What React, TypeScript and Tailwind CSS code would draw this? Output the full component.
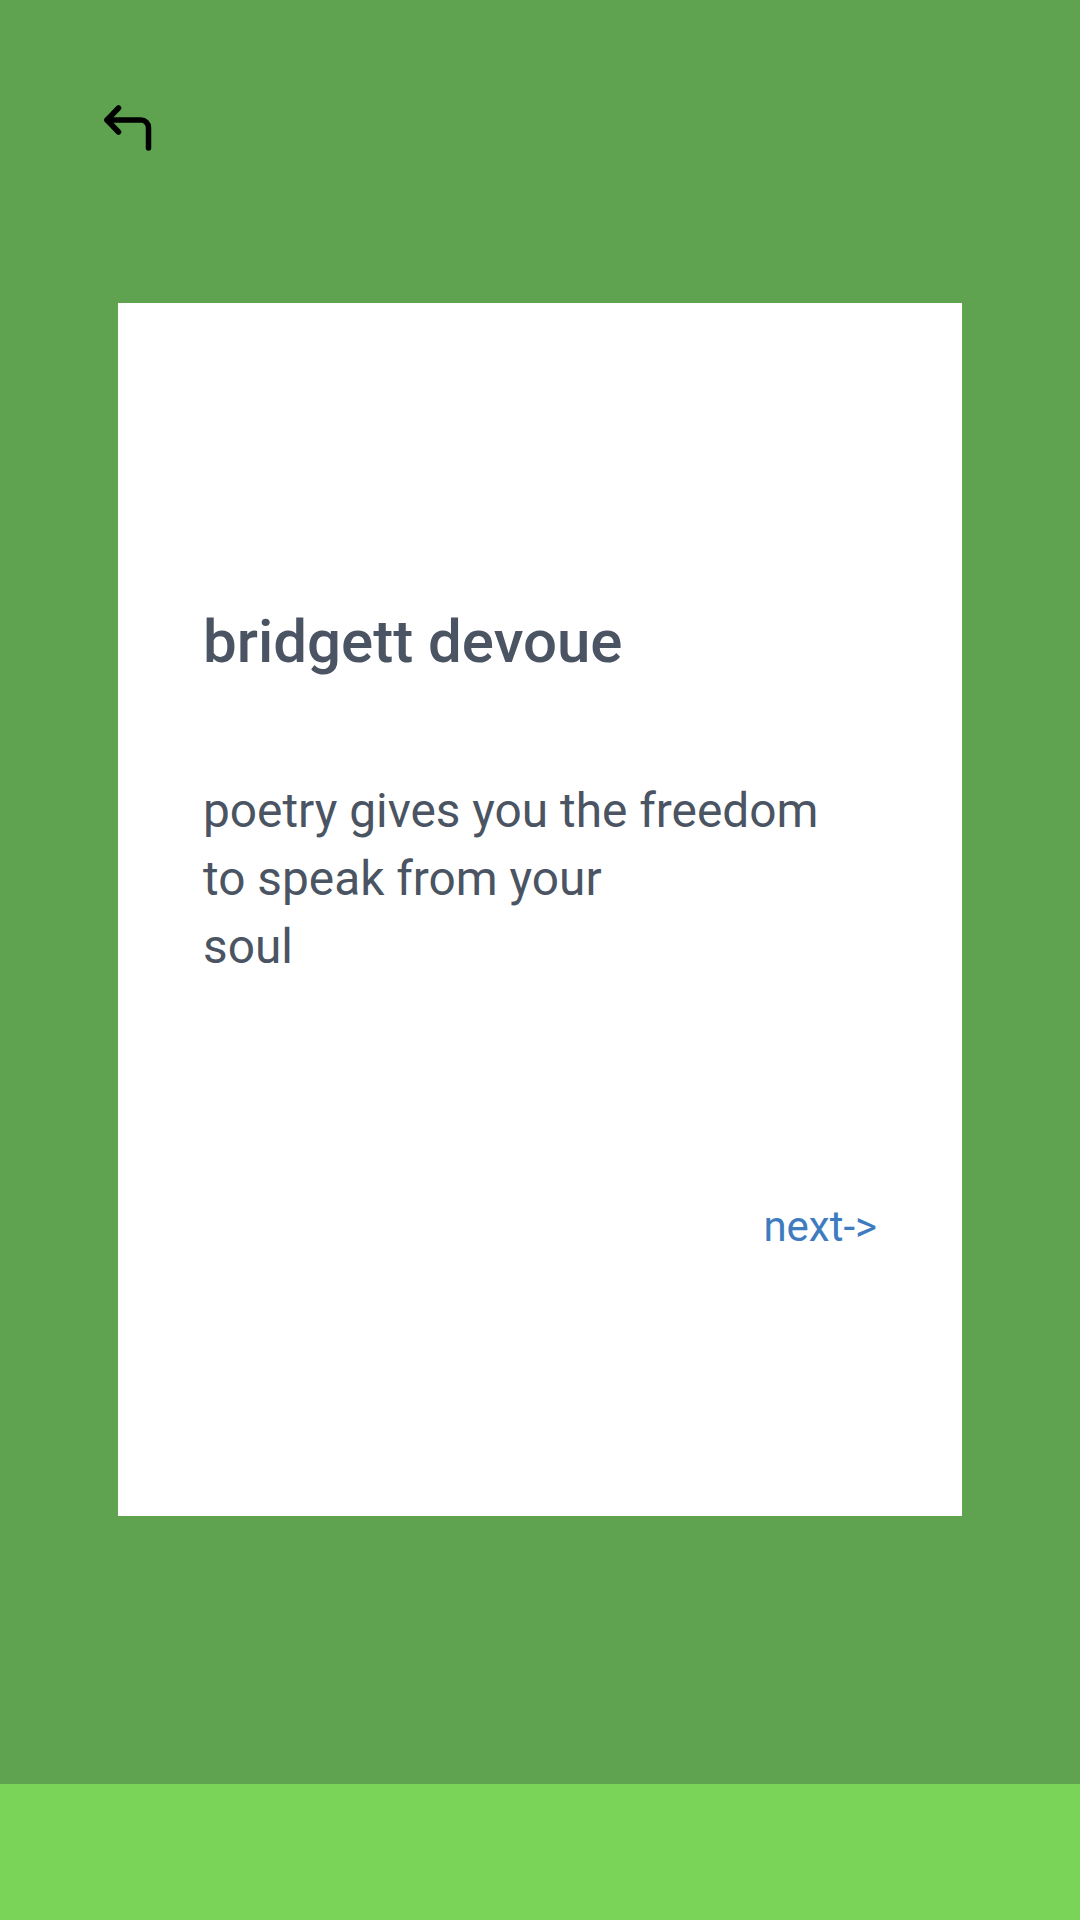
const BackIcon = () => (
    <svg width="56" height="56" viewBox="0 0 56 56" fill="none" stroke="#000000" strokeWidth="5.5" strokeLinecap="round" strokeLinejoin="round">
        <path d="M18.5 8 7 20l11.5 12" />
        <path d="M7 20h34a7.5 7.5 0 0 1 7.5 7.5V48" />
    </svg>
);

const App = () => {
    return (
        <div className="flex h-[1920px] w-[1080px] flex-col bg-[#5fa350]" style={{ fontFamily: 'Roboto, "Noto Sans", sans-serif' }}>
            <div className="flex-1">
                {/* Header */}
                <div className="h-[303px] pl-[100px] pt-[100px]">
                    <button className="block">
                        <BackIcon />
                    </button>
                </div>

                {/* Card */}
                <div className="mx-[118px] flex h-[1213px] flex-col bg-white px-[85px] pt-[303px]">
                    <h1 className="text-[60px] font-medium leading-[72px] text-[#4a5462]">bridgett devoue</h1>
                    <p className="mt-[99px] text-[47.8px] leading-[68px] text-[#4a5462]">
                        poetry gives you the freedom
                        <br />
                        to speak from your
                        <br />
                        soul
                    </p>
                    <div className="mt-[221px] flex justify-end">
                        <a className="text-[42px] leading-[50px] text-[#3f7bbf]">next-&gt;</a>
                    </div>
                </div>
            </div>

            {/* Bottom bar */}
            <div className="h-[136px] bg-[#79d457]"></div>
        </div>
    );
};

export default App;
